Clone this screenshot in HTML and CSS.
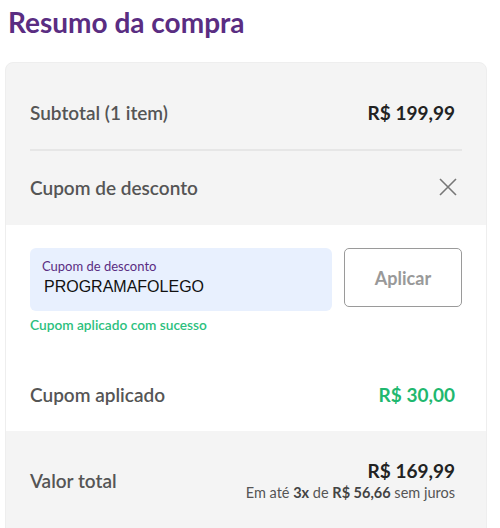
FILE: index.html
```html
<!DOCTYPE html>
<html lang="pt-br">
<head>
  <meta charset="UTF-8">
  <meta name="viewport" content="width=device-width, initial-scale=1.0">
  <title>Resumo da compra</title>
  <link rel="stylesheet" href="styles.css">
</head>
<body>

  <h1 class="title">Resumo da compra</h1>

  <div class="summary">
    <div class="summary-top">
      <div class="row">
        <span class="label">Subtotal (1 item)</span>
        <span class="value">R$ 199,99</span>
      </div>
      <div class="divider"></div>
      <div class="row">
        <span class="label">Cupom de desconto</span>
        <svg class="close" width="20" height="20" viewBox="0 0 20 20">
          <path d="M2 2 L18 18 M18 2 L2 18" stroke="#777" stroke-width="1.6" fill="none"/>
        </svg>
      </div>
    </div>

    <div class="coupon">
      <div class="coupon-form">
        <div class="field">
          <label for="coupon">Cupom de desconto</label>
          <input type="text" id="coupon" value="PROGRAMAFOLEGO">
        </div>
        <button class="apply">Aplicar</button>
      </div>
      <p class="success">Cupom aplicado com sucesso</p>
      <div class="row applied">
        <span class="label">Cupom aplicado</span>
        <span class="value green">R$ 30,00</span>
      </div>
    </div>

    <div class="total">
      <span class="label">Valor total</span>
      <div class="total-values">
        <span class="value">R$ 169,99</span>
        <span class="installments">Em até <b>3x</b> de <b>R$ 56,66</b> sem juros</span>
      </div>
    </div>
  </div>

</body>
</html>
```

FILE: styles.css
```css
body {
  margin: 0;
  padding: 0 13px 0 5px;
  font-family: Lato, "Noto Sans", sans-serif;
  background: #fff;
}

.title {
  margin: 0;
  padding: 5px 0 0 3px;
  height: 62px;
  box-sizing: border-box;
  font-size: 28px;
  font-weight: 700;
  color: #5a2d82;
}

.summary {
  background: #f4f4f4;
  border-radius: 8px;
  border: 1px solid #eeeeee;
  overflow: hidden;
}

.summary-top {
  padding: 37px 24px 26px 24px;
}

.row {
  display: flex;
  justify-content: space-between;
  align-items: center;
  height: 24px;
}

.label {
  font-size: 19px;
  font-weight: 600;
  color: #555;
}

.value {
  font-size: 19px;
  font-weight: 700;
  color: #222;
  margin-right: 7px;
}

.green {
  color: #1fb86f;
}

.divider {
  height: 2px;
  background: #e6e6e6;
  margin: 25px 0 24px 0;
}

.close {
  margin-right: 4px;
}

.coupon {
  background: #fff;
  padding: 23px 24px 25px 24px;
}

.coupon-form {
  display: flex;
  align-items: flex-start;
  gap: 12px;
}

.field {
  flex: 1;
  height: 63px;
  box-sizing: border-box;
  background: #e8f0fe;
  border-radius: 6px;
  padding: 10px 12px 0 12px;
  display: flex;
  flex-direction: column;
}

.field label {
  font-size: 13px;
  color: #5a2d82;
}

.field input {
  border: none;
  background: transparent;
  font-family: "Liberation Sans", Arial, sans-serif;
  font-size: 16px;
  color: #111;
  padding: 4px 0 0 2px;
  outline: none;
}

.apply {
  width: 118px;
  height: 59px;
  background: #fff;
  border: 1px solid #9a9a9a;
  border-radius: 5px;
  font-family: Lato, "Noto Sans", sans-serif;
  font-size: 18px;
  font-weight: 700;
  color: #999;
}

.success {
  margin: 5px 0 0 0;
  font-size: 13.7px;
  font-weight: 600;
  color: #2cc07e;
  height: 20px;
}

.applied {
  margin-top: 46px;
}

.total {
  display: flex;
  justify-content: space-between;
  align-items: center;
  padding: 28px 24px 40px 24px;
}

.total-values {
  display: flex;
  flex-direction: column;
  align-items: flex-end;
  margin-right: 7px;
}

.total-values .value {
  margin-right: 0;
}

.installments {
  font-size: 14.5px;
  color: #555;
  margin-top: 2px;
}

.installments b {
  color: #444;
}
```
